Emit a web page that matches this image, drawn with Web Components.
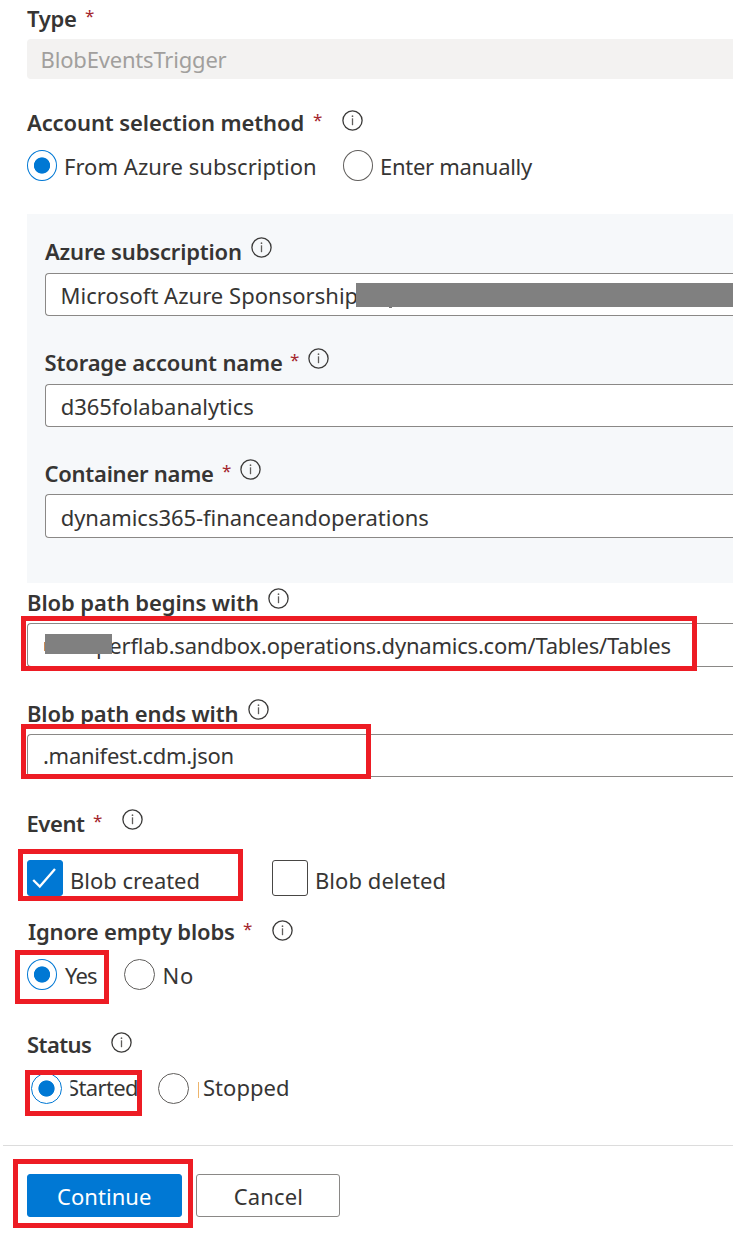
<!DOCTYPE html>
<html lang="en">
<head>
<meta charset="utf-8">
<title>New trigger</title>
<style>
html,body{margin:0;padding:0;background:#fff;overflow:hidden}
body{font-family:"Noto Sans","Open Sans",sans-serif;font-size:22px;color:#363534}
</style>
</head>
<body>
<trigger-form></trigger-form>
<script>
const define=(name,html,init)=>customElements.define(name,class extends HTMLElement{
  connectedCallback(){
    if(this.shadowRoot)return;
    const t=document.createElement('template');t.innerHTML=html;
    this.attachShadow({mode:'open'}).append(t.content.cloneNode(true));
    const g=this.getAttribute('gap'),d=this.getAttribute('drop');
    if(g)this.style.marginLeft=g+'px';
    if(d)this.style.marginTop=d+'px';
    if(init)init.call(this,this.shadowRoot);
  }
});
const ctx=document.createElement('canvas').getContext('2d');

/* Text tracked so that its ink fills exactly the width given in "w". */
define('fit-text',`<style>:host{display:block;flex:none;height:30px;line-height:30px;white-space:pre}
:host([strong]){font-weight:600}</style><slot></slot>`,function(){
  const s=this.textContent,w=+this.getAttribute('w'),size=this.getAttribute('size')||22;
  this.style.fontSize=size+'px';
  ctx.font=(this.hasAttribute('strong')?600:400)+' '+size+'px "Noto Sans"';
  const m=ctx.measureText(s),ink=m.actualBoundingBoxLeft+m.actualBoundingBoxRight;
  this.style.width=w+'px';
  if(s.length>1)this.style.letterSpacing=((w-ink)/(s.length-1)).toFixed(3)+'px';
  this.style.textIndent=m.actualBoundingBoxLeft.toFixed(2)+'px';
});
define('info-icon',`<style>:host{display:block;flex:none;width:21px;height:21px}svg{display:block}</style>
<svg width="21" height="21" viewBox="0 0 21 21"><circle cx="10.5" cy="10.5" r="9.6" fill="none" stroke="#3b3a39" stroke-width="1.3"/><path d="M10.5 8.3v6.9" stroke="#605e5c" stroke-width="1.3"/><circle cx="10.5" cy="6.2" r=".85" fill="#605e5c"/></svg>`);
define('required-mark',`<style>:host{display:block;flex:none;width:8px;color:#a4262c}</style><fit-text w="8" size="17">*</fit-text>`);
define('radio-dot',`<style>:host{display:block;flex:none;box-sizing:border-box;width:31px;height:31px;border:1px solid #605e5c;border-radius:50%;background:#fff}
:host([narrow]){width:30px}
:host([checked]){border-color:#0078d4;background:radial-gradient(circle,#0078d4 7.7px,transparent 8.5px)}</style>`);
define('check-box',`<style>:host{display:block;flex:none;box-sizing:border-box;width:36px;height:36px;border:1px solid #484644;border-radius:3px;background:#fff}
svg{display:none}:host([checked]){border-color:#0078d4;background:#0078d4}:host([checked]) svg{display:block}</style>
<svg width="34" height="34" viewBox="0 0 34 34"><path d="M5.2 19l6.6 6.6L27 8" fill="none" stroke="#fff" stroke-width="2.3"/></svg>`);
define('form-row',`<style>:host{display:flex;align-items:flex-start;box-sizing:border-box;flex:none}</style><slot></slot>`,function(){
  this.style.height=this.getAttribute('h')+'px';});
define('text-field',`<style>:host{display:flex;align-items:flex-start;box-sizing:border-box;flex:none;position:relative;border:1px solid #8a8886;border-right:0;border-radius:4px 0 0 4px;background:#fff}
:host([disabled]){background:#f3f2f1;border-color:#f3f2f1;color:#a19f9d}</style><slot></slot>`,function(){
  this.style.height=this.getAttribute('h')+'px';});
define('redaction-bar',`<style>:host{display:block;position:absolute;background:#808080}</style>`,function(){
  const [x,y,w,h]=this.getAttribute('box').split(' ');
  Object.assign(this.style,{left:x+'px',top:y+'px',width:w+'px',height:h+'px'});});
define('high-light',`<style>:host{display:block;position:absolute;box-sizing:border-box;border:5px solid #ed1c24;pointer-events:none}</style>`,function(){
  const [x,y,r,b]=this.getAttribute('box').split(' ').map(Number);
  Object.assign(this.style,{left:x+'px',top:y+'px',width:r-x+'px',height:b-y+'px'});});
define('form-button',`<style>:host{display:flex;justify-content:center;align-items:flex-start;flex:none;box-sizing:border-box;height:43px;padding-top:6px;border:1px solid #8a8886;border-radius:3px;background:#fff}
:host([primary]){background:#0078d4;border-color:#0078d4;color:#fff}</style><slot></slot>`,function(){
  this.style.width=this.getAttribute('w')+'px';});

define('trigger-form',`<style>
:host{display:flex;flex-direction:column;position:relative;width:733px;height:1234px;overflow:hidden;background:#fff}
.inset{margin-left:27px;flex:none}
section{margin-left:27px;height:369px;flex:none;box-sizing:border-box;padding-left:18px;background:#f6f8fa}
.cut{clip-path:inset(0 -4px 0 2.5px)}
.caret{flex:none;width:1px;height:16px;background:#eeb56c}
.rule{flex:none;height:1px;margin-left:3px;background:#dcdcdc}
.speck{position:absolute;left:343px;top:33px;width:3px;height:1px;background:#777}
.edge{position:absolute;left:16px;top:18px;width:1px;height:9px;background:#c98a55}
</style>
<form-row class="inset" h="39"><fit-text strong w="49" drop="3">Type</fit-text><required-mark gap="9" drop="1"></required-mark></form-row>
<text-field class="inset" disabled h="40"><fit-text w="184" gap="14.6" drop="4">BlobEventsTrigger</fit-text></text-field>
<form-row class="inset" h="71"><fit-text strong w="276.5" drop="28">Account selection method</fit-text><required-mark gap="9.5" drop="26"></required-mark><info-icon gap="21" drop="31"></info-icon></form-row>
<form-row class="inset" h="64"><radio-dot narrow checked></radio-dot><fit-text w="249" gap="9" drop="1">From Azure subscription</fit-text><radio-dot narrow gap="28"></radio-dot><fit-text w="151" gap="9" drop="1">Enter manually</fit-text></form-row>
<section>
<form-row h="59"><fit-text strong w="196" drop="22">Azure subscription</fit-text><info-icon gap="10" drop="23"></info-icon></form-row>
<text-field h="43"><fit-text w="295" gap="16.6" drop="6">Microsoft Azure Sponsorship</fit-text><redaction-bar box="310 9 400 24"></redaction-bar><i class="speck"></i></text-field>
<form-row h="68"><fit-text strong w="236.5" gap="0.5" drop="31">Storage account name</fit-text><required-mark gap="8" drop="29"></required-mark><info-icon gap="10" drop="32"></info-icon></form-row>
<text-field h="43"><fit-text w="191.5" gap="15.7" drop="6">d365folabanalytics</fit-text></text-field>
<form-row h="67"><fit-text strong w="167.5" gap="0.5" drop="31">Container name</fit-text><required-mark gap="9" drop="29"></required-mark><info-icon gap="10" drop="32"></info-icon></form-row>
<text-field h="44"><fit-text w="366.5" gap="15.7" drop="7">dynamics365-financeandoperations</fit-text></text-field>
</section>
<form-row class="inset" h="40"><fit-text strong w="230" gap="1" drop="4">Blob path begins with</fit-text><info-icon gap="10" drop="5"></info-icon></form-row>
<text-field class="inset" h="44"><fit-text w="573.5" gap="69" drop="6">perflab.sandbox.operations.dynamics.com/Tables/Tables</fit-text><redaction-bar box="17 10 67 20"></redaction-bar><i class="edge"></i></text-field>
<form-row class="inset" h="67"><fit-text strong w="209.5" gap="1" drop="31">Blob path ends with</fit-text><info-icon gap="10" drop="32"></info-icon></form-row>
<text-field class="inset" h="43"><fit-text w="188.5" gap="16" drop="5">.manifest.cdm.json</fit-text></text-field>
<form-row class="inset" h="83"><fit-text strong w="56.5" gap="1.5" drop="31">Event</fit-text><required-mark gap="8" drop="29"></required-mark><info-icon gap="21" drop="32"></info-icon></form-row>
<form-row class="inset" h="50"><check-box checked></check-box><fit-text w="126.5" gap="9" drop="5">Blob created</fit-text><check-box gap="73.5"></check-box><fit-text w="127.5" gap="9" drop="5">Blob deleted</fit-text></form-row>
<form-row class="inset" h="49"><fit-text strong w="206" gap="1" drop="6">Ignore empty blobs</fit-text><required-mark gap="9" drop="4"></required-mark><info-icon gap="21" drop="10"></info-icon></form-row>
<form-row class="inset" h="60"><radio-dot narrow checked></radio-dot><fit-text w="32" gap="8" drop="1">Yes</fit-text><radio-dot gap="27"></radio-dot><fit-text w="28.5" gap="9.5" drop="1">No</fit-text></form-row>
<form-row class="inset" h="54"><fit-text strong w="63" gap="1" drop="10">Status</fit-text><info-icon gap="20" drop="13"></info-icon></form-row>
<form-row class="inset" h="72"><radio-dot checked gap="4"></radio-dot><fit-text class="cut" w="69" gap="6" drop="-1">Started</fit-text><radio-dot gap="21"></radio-dot><i class="caret" style="margin:9px 0 0 9px"></i><fit-text w="84" gap="5" drop="-1">Stopped</fit-text></form-row>
<div class="rule"></div>
<form-row class="inset" h="88"><form-button primary w="155" drop="28"><fit-text w="93">Continue</fit-text></form-button><form-button gap="14" w="144" drop="28"><fit-text w="66.5">Cancel</fit-text></form-button></form-row>
<high-light box="21 616 697 671"></high-light>
<high-light box="21 724 371 779"></high-light>
<high-light box="18 849 243 901"></high-light>
<high-light box="15 950 109 1004"></high-light>
<high-light box="25 1070 142 1116"></high-light>
<high-light box="13 1159 193 1228"></high-light>
`);
</script>
</body>
</html>
